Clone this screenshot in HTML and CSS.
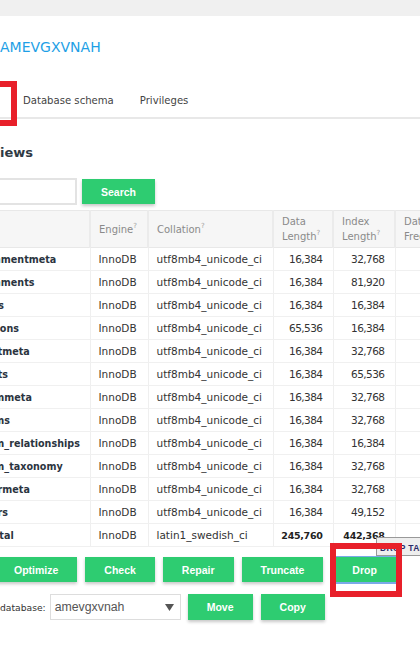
FILE: index.html
```html
<!DOCTYPE html>
<html lang="en">
<head>
<meta charset="utf-8">
<title>Database amevgxvnah</title>
<link rel="stylesheet" href="styles.css">
</head>
<body>
<div class="topbar"></div>
<main class="page">
  <h2 class="title">AMEVGXVNAH</h2>
  <nav class="tabs">
    <span class="tab">Database schema</span>
    <span class="tab">Privileges</span>
  </nav>
  <div class="mark mark-tab"></div>

  <h3 class="heading">iews</h3>

  <form class="search">
    <input class="search-input" type="text">
    <button class="btn" type="button">Search</button>
  </form>

  <table class="tables">
    <colgroup>
      <col class="c-name"><col class="c-engine"><col class="c-coll"><col class="c-data"><col class="c-index"><col class="c-free">
    </colgroup>
    <thead>
      <tr>
        <th></th>
        <th>Engine<sup>?</sup></th>
        <th>Collation<sup>?</sup></th>
        <th>Data<br>Length<sup>?</sup></th>
        <th>Index<br>Length<sup>?</sup></th>
        <th>Data<br>Free<sup>?</sup></th>
      </tr>
    </thead>
    <tbody>
      <tr><td class="name">wp_commentmeta</td><td>InnoDB</td><td>utf8mb4_unicode_ci</td><td class="num">16,384</td><td class="num">32,768</td><td></td></tr>
      <tr><td class="name">wp_comments</td><td>InnoDB</td><td>utf8mb4_unicode_ci</td><td class="num">16,384</td><td class="num">81,920</td><td></td></tr>
      <tr><td class="name">wp_links</td><td>InnoDB</td><td>utf8mb4_unicode_ci</td><td class="num">16,384</td><td class="num">16,384</td><td></td></tr>
      <tr><td class="name">wp_options</td><td>InnoDB</td><td>utf8mb4_unicode_ci</td><td class="num">65,536</td><td class="num">16,384</td><td></td></tr>
      <tr><td class="name">wp_postmeta</td><td>InnoDB</td><td>utf8mb4_unicode_ci</td><td class="num">16,384</td><td class="num">32,768</td><td></td></tr>
      <tr><td class="name">wp_posts</td><td>InnoDB</td><td>utf8mb4_unicode_ci</td><td class="num">16,384</td><td class="num">65,536</td><td></td></tr>
      <tr><td class="name">wp_termmeta</td><td>InnoDB</td><td>utf8mb4_unicode_ci</td><td class="num">16,384</td><td class="num">32,768</td><td></td></tr>
      <tr><td class="name">wp_terms</td><td>InnoDB</td><td>utf8mb4_unicode_ci</td><td class="num">16,384</td><td class="num">32,768</td><td></td></tr>
      <tr><td class="name">wp_term_relationships</td><td>InnoDB</td><td>utf8mb4_unicode_ci</td><td class="num">16,384</td><td class="num">16,384</td><td></td></tr>
      <tr><td class="name">wp_term_taxonomy</td><td>InnoDB</td><td>utf8mb4_unicode_ci</td><td class="num">16,384</td><td class="num">32,768</td><td></td></tr>
      <tr><td class="name">wp_usermeta</td><td>InnoDB</td><td>utf8mb4_unicode_ci</td><td class="num">16,384</td><td class="num">32,768</td><td></td></tr>
      <tr><td class="name">wp_users</td><td>InnoDB</td><td>utf8mb4_unicode_ci</td><td class="num">16,384</td><td class="num">49,152</td><td></td></tr>
    </tbody>
    <tfoot>
      <tr><td class="name">12 in total</td><td>InnoDB</td><td>latin1_swedish_ci</td><td class="num total">245,760</td><td class="num total">442,368</td><td></td></tr>
    </tfoot>
  </table>

  <div class="actions">
    <button class="btn" type="button">Optimize</button>
    <button class="btn" type="button">Check</button>
    <button class="btn" type="button">Repair</button>
    <button class="btn" type="button">Truncate</button>
    <button class="btn btn-drop" type="button">Drop</button>
  </div>

  <div class="move">
    <span class="move-label">database:</span>
    <div class="select">
      <span class="select-value">amevgxvnah</span>
      <svg class="select-arrow" width="9" height="7" viewBox="0 0 9 7"><path d="M0 0H9L4.5 7Z" fill="#555"/></svg>
    </div>
    <button class="btn" type="button">Move</button>
    <button class="btn" type="button">Copy</button>
  </div>

  <div class="tip">DROP TABLE</div>
  <div class="mark mark-drop"></div>
</main>
</body>
</html>
```
FILE: styles.css
```css
html, body {
  margin: 0;
  padding: 0;
}
body {
  width: 420px;
  height: 651px;
  overflow: hidden;
  background: #fff;
  font-family: "DejaVu Sans", Verdana, sans-serif;
  color: #333;
}
.topbar {
  height: 16px;
  background: #f0f0f0;
}
.page {
  position: relative;
  padding: 21px 0 0 0;
}
.title {
  margin: 0;
  font-size: 14px;
  line-height: 20px;
  font-weight: normal;
  color: #1e9fe6;
}
.tabs {
  display: flex;
  margin-top: 27px;
  padding-left: 10px;
  height: 33px;
  border-bottom: 2px solid #e8e8e8;
}
.tab {
  padding: 0 13px;
  line-height: 34px;
  font-size: 10.1px;
  color: #444;
}
.heading {
  margin: 25px 0 0 0;
  font-size: 13px;
  line-height: 18px;
  font-weight: bold;
  color: #2f3a44;
}
.search {
  display: flex;
  align-items: center;
  margin: 16px 0 0 0;
  height: 27px;
}
.search-input {
  box-sizing: border-box;
  width: 200px;
  height: 27px;
  margin: 0 0 0 -123px;
  border: 2px solid #e3e3e3;
  background: #fff;
}
.btn {
  box-sizing: border-box;
  height: 25px;
  padding: 0 19px;
  border: none;
  background: #2ecc71;
  color: #fff;
  font-family: "Liberation Sans", Arial, sans-serif;
  font-size: 10.5px;
  font-weight: bold;
  box-shadow: 0 2px 3px rgba(0, 0, 0, 0.22);
}
.search .btn {
  margin-left: 5px;
}
.tables {
  margin: 5px 0 0 -60px;
  border-collapse: collapse;
  table-layout: fixed;
  width: 515px;
  font-size: 10.5px;
}
.c-name { width: 150px; }
.c-engine { width: 58px; }
.c-coll { width: 125px; }
.c-data { width: 60px; }
.c-index { width: 62px; }
.c-free { width: 60px; }
.tables th {
  height: 36px;
  padding: 0 0 0 8px;
  text-align: left;
  vertical-align: middle;
  font-weight: normal;
  font-size: 10px;
  line-height: 15px;
  color: #8a8a8a;
  background: #f6f6f6;
  border-top: 1px solid #e8e8e8;
  border-bottom: 1px solid #e8e8e8;
  border-left: 2px solid #ebebeb;
}
.tables th:first-child {
  border-left: none;
}
.tables sup {
  font-size: 7px;
  line-height: 0;
  vertical-align: 5px;
  color: #a0a0a0;
}
.tables td {
  height: 22px;
  padding: 0 0 0 8px;
  white-space: nowrap;
  overflow: hidden;
  vertical-align: middle;
  border-bottom: 1px solid #f0f0f0;
  border-left: 1px solid #efefef;
  color: #333;
}
.tables td.name {
  border-left: none;
  padding-left: 18px;
  font-size: 9.6px;
  font-weight: bold;
  color: #2b3440;
}
.tables td.num {
  text-align: right;
  padding: 0 10px 0 0;
  letter-spacing: -0.55px;
}
.tables td.total {
  font-weight: bold;
  font-size: 9.5px;
  letter-spacing: -0.3px;
  color: #222;
}
tfoot td.name {
  color: #111;
}
.actions {
  display: flex;
  gap: 8px;
  margin: 10px 0 0 -5px;
}
.btn-drop {
  margin-left: 2px;
  box-shadow: 0 -1px 0 #7aa9e8, 0 2px 0 #7aa9e8;
}
.move {
  display: flex;
  align-items: center;
  margin-top: 12px;
  height: 26px;
}
.move-label {
  font-size: 9.2px;
  color: #333;
  margin-right: 4px;
}
.select {
  box-sizing: border-box;
  display: flex;
  align-items: center;
  justify-content: space-between;
  width: 131px;
  height: 26px;
  padding: 0 6px 0 4px;
  border: 1px solid #ddd;
  background: #fff;
  margin-right: 7px;
}
.select-value {
  font-family: "Liberation Sans", Arial, sans-serif;
  font-size: 12.3px;
  color: #555;
}
.move .btn {
  height: 26px;
  margin-right: 8px;
}
.mark {
  position: absolute;
  box-sizing: border-box;
  border: 6px solid #e8202a;
}
.mark-tab {
  left: -40px;
  top: 65px;
  width: 57px;
  height: 45px;
}
.mark-drop {
  left: 330px;
  top: 527px;
  width: 72px;
  height: 54px;
}
.tip {
  position: absolute;
  left: 376px;
  top: 521px;
  width: 60px;
  height: 19px;
  box-sizing: border-box;
  padding: 5px 0 0 3px;
  background: #eee;
  border: 1px solid #999;
  font-family: "Liberation Sans", Arial, sans-serif;
  font-size: 8.5px;
  font-weight: bold;
  letter-spacing: 0.3px;
  color: #2b2b6b;
  white-space: nowrap;
  overflow: hidden;
}
```
